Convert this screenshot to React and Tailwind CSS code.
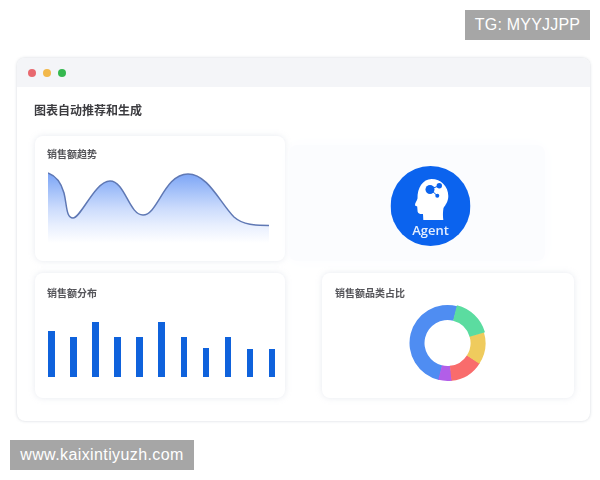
const cjk = { fontFamily: '"Liberation Sans", "Noto Sans CJK SC", sans-serif' };

const bars = [
  { h: 46, gap: 0 },
  { h: 40, gap: 15.5 },
  { h: 55, gap: 15.5 },
  { h: 40, gap: 15.5 },
  { h: 40, gap: 15.5 },
  { h: 55, gap: 15.5 },
  { h: 40, gap: 16 },
  { h: 29, gap: 15.5 },
  { h: 40, gap: 15.5 },
  { h: 28, gap: 15.5 },
  { h: 28, gap: 15.5 },
];

function Card({ title, titleClass, children }) {
  return (
    <div className="h-[125px] rounded-lg bg-white shadow-[0_0_6px_rgba(170,180,200,0.28)]">
      <div className={`text-[10px] leading-[15px] font-semibold text-[#55555a] ${titleClass}`}>{title}</div>
      {children}
    </div>
  );
}

function LineChart() {
  const line =
    "M0 38 C8 41 13 47 16 58 C19 70 18 83 25 83 C33 83 47 46 62 46 C77 46 81 80 95 80 C110 80 116 39 140 39 C160 39 172 68 186 82 C195 90 208 90.500 221 90.500";
  return (
    <svg className="block h-[112px] -mt-[26px] ml-[13px]" viewBox="0 0 237 112" style={{ width: 237 }}>
      <defs>
        <linearGradient id="area" gradientUnits="userSpaceOnUse" x1="0" y1="38" x2="0" y2="108">
          <stop offset="0" stopColor="#7ba4f6" />
          <stop offset="0.25" stopColor="#a3c0f9" />
          <stop offset="0.5" stopColor="#cbdbfc" />
          <stop offset="0.75" stopColor="#e8effe" />
          <stop offset="1" stopColor="#ffffff" />
        </linearGradient>
      </defs>
      <path d={`${line} L221 112 L0 112 Z`} fill="url(#area)" transform="translate(0 -1)" />
      <path d={line} fill="none" stroke="#5f78b4" strokeWidth="1.5" transform="translate(0 -1)" />
    </svg>
  );
}

function Donut() {
  const cx = 40, cy = 40, r0 = 23, r1 = 38;
  const pt = (r, a) => {
    const t = ((a - 90) * Math.PI) / 180;
    return `${cx + r * Math.cos(t)} ${cy + r * Math.sin(t)}`;
  };
  const seg = (a, b, R = r1) =>
    `M${pt(r0, a)} L${pt(R, a)} A${R} ${R} 0 ${b - a > 180 ? 1 : 0} 1 ${pt(R, b)} L${pt(r0, b)} A${r0} ${r0} 0 ${b - a > 180 ? 1 : 0} 0 ${pt(r0, a)} Z`;
  return (
    <svg className="block w-[80px] h-[80px] mx-auto mt-[2px] translate-x-[-0.5px]" viewBox="0 0 80 80">
      <path d={seg(193, 375)} fill="#4f8df2" />
      <path d={seg(173, 194)} fill="#b25ee8" />
      <path d={seg(122, 174)} fill="#f96c6c" />
      <path d={seg(73, 123)} fill="#efcb5d" />
      <path d={seg(14, 74, 39)} fill="#5bdca0" />
    </svg>
  );
}

function Agent() {
  return (
    <div className="h-[116px] mt-[9px] flex items-center justify-center bg-[#fbfcfe] rounded-lg -ml-[33px] mr-[29px] shadow-[0_0_18px_#fbfcfe]">
      <svg className="block w-[80px] h-[80px] translate-x-[13.500px] translate-y-[3px]" viewBox="390.500 166 80 80">
        <circle cx="430.500" cy="206" r="40" fill="#0b63ee" />
        <path
          d="M431.500 179 C441 179 448.300 186.500 448.300 196 C448.300 201.500 445.500 205 443.500 208 C442.800 212 442.800 216 443.300 220 L423.300 220 L423 214 C421 214.300 418 214 417.600 211.500 L417.200 206.500 L415 205.500 C414.700 203.500 417 200.500 417.500 198.500 C417 188 423 179 431.500 179 Z"
          fill="#ffffff"
        />
        <path d="M430 189.300 L439.300 185.700 M431 190 L437.300 195.700" stroke="#0b63ee" strokeWidth="1" />
        <circle cx="430" cy="189.500" r="4.500" fill="#0b63ee" />
        <circle cx="439.300" cy="185.700" r="2.700" fill="#0b63ee" />
        <circle cx="437.300" cy="195.700" r="2" fill="#0b63ee" />
        <text x="430.500" y="234.500" textAnchor="middle" fill="#e4eeff" fontSize="13" fontWeight="600" fontFamily="'Open Sans', sans-serif">
          Agent
        </text>
      </svg>
    </div>
  );
}

export default function App() {
  return (
    <div className="relative w-[600px] h-[480px] bg-white overflow-hidden pt-[58px] pl-[17px]" style={cjk}>
      <div className="w-[573px] h-[363px] rounded-lg bg-white shadow-[0_0_3px_rgba(150,160,175,0.45)] overflow-hidden blur-[0.5px]">
        <div className="h-[29px] bg-[#f4f5f8] flex items-center gap-[7px] pl-[11px]">
          <span className="w-2 h-2 rounded-full bg-[#e8696f]" />
          <span className="w-2 h-2 rounded-full bg-[#f2b84b]" />
          <span className="w-2 h-2 rounded-full bg-[#35b84f]" />
        </div>
        <div className="pl-[18px] pr-[16px]">
          <div className="pt-[15px] h-[49px] -ml-[1px] text-[12px] leading-[18px] font-bold text-[#3c3c40]">图表自动推荐和生成</div>
          <div className="grid grid-cols-[250px_252px] gap-x-[37px] gap-y-[12px]">
            <Card title="销售额趋势" titleClass="pl-[12px] pt-[11px]">
              <LineChart />
            </Card>
            <Agent />
            <Card title="销售额分布" titleClass="pl-[12px] pt-[13px]">
              <div className="flex items-end h-[55px] ml-[13px] mt-[21px]">
                {bars.map((b, i) => (
                  <div
                    key={i}
                    className="w-[6.500px] bg-[#0f62dc] shrink-0"
                    style={{ height: b.h, marginLeft: b.gap }}
                  />
                ))}
              </div>
            </Card>
            <Card title="销售额品类占比" titleClass="pl-[13px] pt-[13px]">
              <Donut />
            </Card>
          </div>
        </div>
      </div>
      <div className="absolute left-[465px] top-[10px] w-[125px] h-[30px] bg-[#a6a6a6] text-white text-[16px] tracking-[0.2px] leading-[30px] text-center">
        TG: MYYJJPP
      </div>
      <div className="absolute left-[10px] top-[440px] w-[184px] h-[30px] bg-[#a6a6a6] text-white text-[16px] tracking-[0.4px] leading-[30px] text-center">
        www.kaixintiyuzh.com
      </div>
    </div>
  );
}
